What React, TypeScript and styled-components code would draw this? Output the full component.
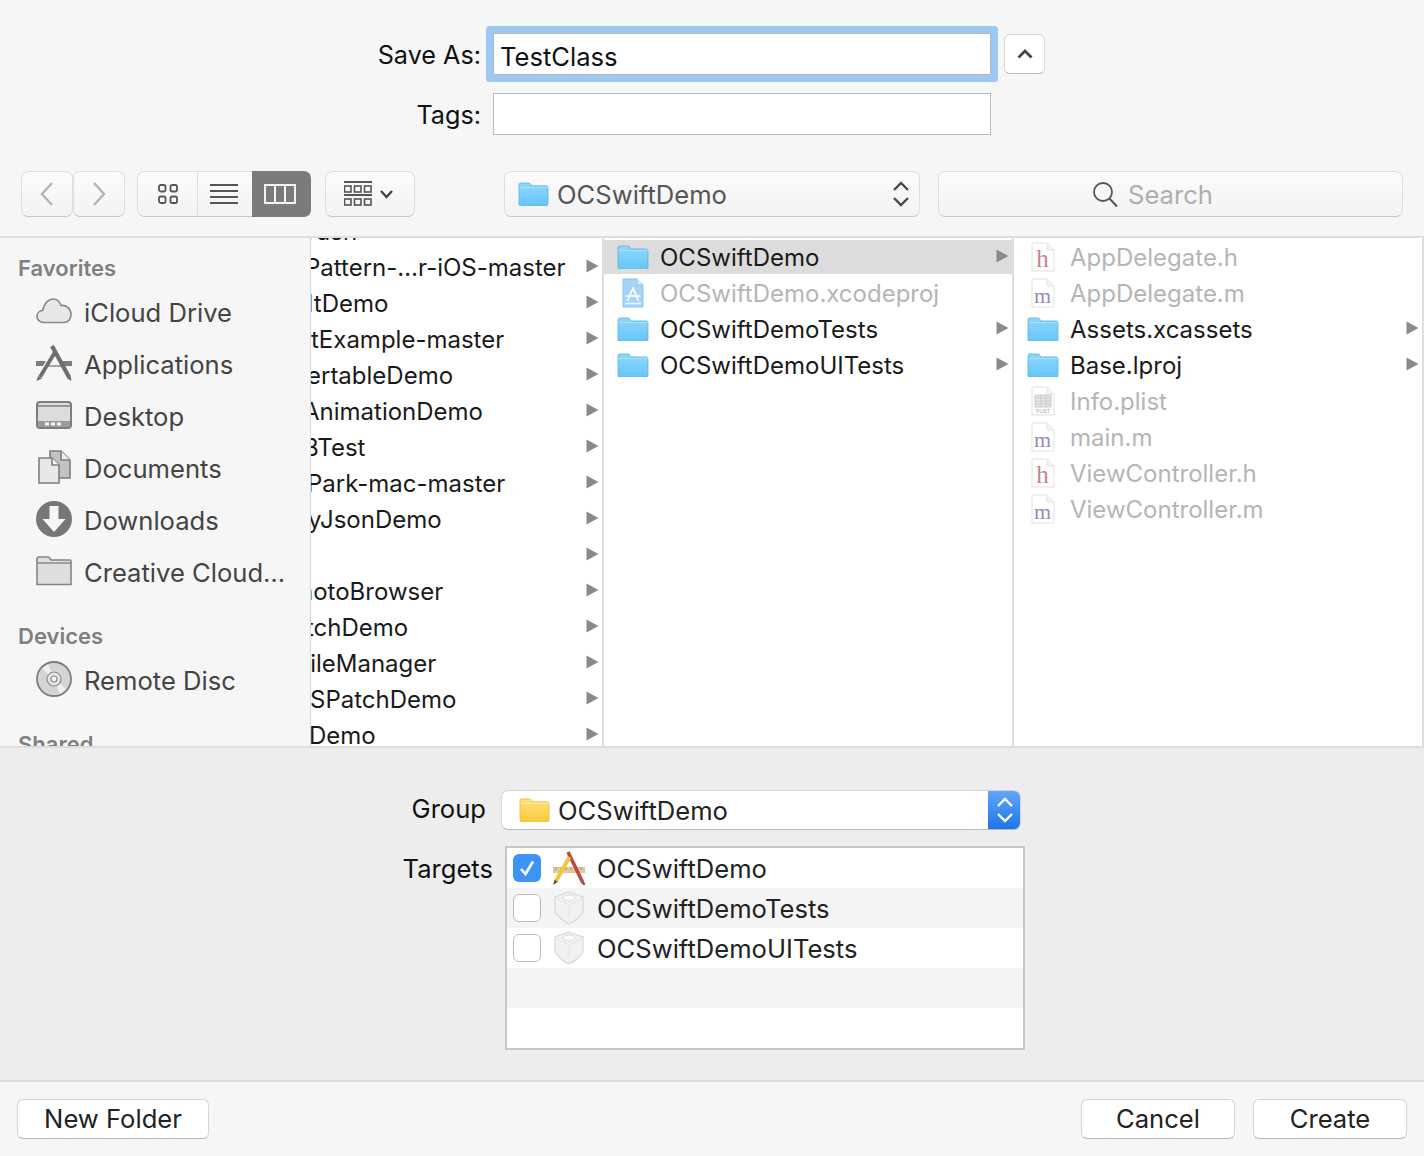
import * as React from 'react'
import styled, { createGlobalStyle } from 'styled-components'

const GlobalStyle = createGlobalStyle`
  html, body {
    margin: 0;
    padding: 0;
    background: #f6f6f6;
  }
  body {
    font-family: Inter, "Liberation Sans", sans-serif;
    font-size: 25.6px;
    color: #1a1a1a;
  }
  * {
    box-sizing: border-box;
  }
`

const FolderIcon = ({ yellow = false, width = 32 }: { yellow?: boolean; width?: number }) => {
  const id = yellow ? 'folderYellow' : 'folderBlue'
  return (
    <svg width={width} height={width * 0.78} viewBox="0 0 32 25" style={{ flex: 'none' }}>
      <defs>
        <linearGradient id={id} x1="0" y1="0" x2="0" y2="1">
          <stop offset="0" stopColor={yellow ? '#ffe27a' : '#8ed8fb'} />
          <stop offset="1" stopColor={yellow ? '#fcc93f' : '#66c5f8'} />
        </linearGradient>
      </defs>
      <path
        d="M1 2.500C1 1.500 1.800 1 3 1H11c1 0 1.500.5 2 1.500L13.500 4H29.500c1 0 1.500.8 1.500 2v17c0 .8-.7 1.300-1.500 1.300h-27c-.8 0-1.500-.5-1.500-1.300z"
        fill={`url(#${id})`}
        stroke={yellow ? '#edb930' : '#5bb0e0'}
        strokeWidth="0.8"
      />
      <path d="M1.500 5.500h29" stroke={yellow ? '#ffeeaa' : '#a8e2fc'} strokeWidth="1" />
    </svg>
  )
}

const SheetOutline = () => (
  <>
    <path d="M1 1h15l7 7v21H1z" fill="#fff" stroke="#e1e1e1" strokeWidth="1" />
    <path d="M16 1v7h7" fill="#f4f4f4" stroke="#e1e1e1" strokeWidth="1" />
  </>
)

const SourceIcon = ({ kind }: { kind: 'h' | 'm' }) => (
  <svg width="24" height="30" viewBox="0 0 24 30" style={{ flex: 'none' }}>
    <SheetOutline />
    <text
      x="11.500"
      y="25"
      textAnchor="middle"
      fontFamily='"Liberation Serif", serif'
      fontSize={kind === 'h' ? 25 : 22}
      fill={kind === 'h' ? '#c9808f' : '#9d8ab8'}
    >
      {kind}
    </text>
  </svg>
)

const PlistIcon = () => (
  <svg width="24" height="30" viewBox="0 0 24 30" style={{ flex: 'none' }}>
    <SheetOutline />
    <path
      d="M4 9h16v12H4z M4 12h16 M4 15h16 M4 18h16 M10 9v12 M15 9v12"
      fill="#e6e6e6"
      stroke="#cbcbcb"
      strokeWidth="1"
    />
    <text x="12" y="27" textAnchor="middle" fontFamily='"Liberation Sans", sans-serif' fontSize="5" fill="#a8a8a8">
      PLIST
    </text>
  </svg>
)

const ProjectIcon = () => (
  <svg width="24" height="30" viewBox="0 0 24 30" style={{ flex: 'none' }}>
    <path d="M2 1h14l6 6v22H2z" fill="#a9d3f5" stroke="#8fc1ea" strokeWidth="1" />
    <path d="M16 1v6h6" fill="#d9edfc" stroke="#8fc1ea" strokeWidth="1" />
    <path d="M4 25.500h16" stroke="#eaf5fd" strokeWidth="1.500" />
    <path d="M6.500 23l5.500-13 5.500 13 M4.500 18h15" fill="none" stroke="#fff" strokeWidth="1.600" />
  </svg>
)

const Arrow = () => (
  <ArrowWrap>
    <svg width="13" height="14" viewBox="0 0 13 14">
      <path d="M0.500 0.500L12.500 7L0.500 13.500z" fill="#8a8a8a" />
    </svg>
  </ArrowWrap>
)

const Chevron = ({ d }: { d: string }) => (
  <svg width="20" height="28" viewBox="0 0 20 28">
    <path d={d} fill="none" stroke="#b4b4b4" strokeWidth="2.400" />
  </svg>
)

const GridIcon = () => (
  <svg width="22" height="22" viewBox="0 0 22 22">
    <g fill="none" stroke="#555" strokeWidth="1.800">
      <rect x="2" y="2" width="6.500" height="6.500" rx="1.800" />
      <rect x="13.500" y="2" width="6.500" height="6.500" rx="1.800" />
      <rect x="2" y="13.500" width="6.500" height="6.500" rx="1.800" />
      <rect x="13.500" y="13.500" width="6.500" height="6.500" rx="1.800" />
    </g>
  </svg>
)

const ListIcon = () => (
  <svg width="30" height="22" viewBox="0 0 30 22">
    <path d="M1 2h28 M1 8h28 M1 14h28 M1 20h28" stroke="#555" strokeWidth="1.800" />
  </svg>
)

const ColumnsIcon = () => (
  <svg width="32" height="22" viewBox="0 0 32 22">
    <path d="M1 2h30v18H1z M11 2v18 M21 2v18" fill="none" stroke="#f4f4f4" strokeWidth="2" />
  </svg>
)

const ArrangeIcon = () => (
  <svg width="52" height="28" viewBox="0 0 52 28">
    <g fill="none" stroke="#555" strokeWidth="1.600">
      <path d="M0 2h28 M0 15h28" strokeWidth="1.800" />
      <rect x="0.500" y="6" width="6.500" height="6" />
      <rect x="10.500" y="6" width="6.500" height="6" />
      <rect x="20.500" y="6" width="6.500" height="6" />
      <rect x="0.500" y="19" width="6.500" height="6" />
      <rect x="10.500" y="19" width="6.500" height="6" />
      <rect x="20.500" y="19" width="6.500" height="6" />
    </g>
    <path d="M37 11l5.500 6 5.500-6" fill="none" stroke="#444" strokeWidth="2.400" />
  </svg>
)

const UpDownIcon = ({ color = '#4a4a4a' }: { color?: string }) => (
  <svg width="18" height="28" viewBox="0 0 18 28">
    <path d="M2 10l7-7 7 7 M2 18l7 7 7-7" fill="none" stroke={color} strokeWidth="2.400" />
  </svg>
)

const SearchIcon = () => (
  <svg width="27" height="27" viewBox="0 0 27 27">
    <circle cx="11" cy="11" r="9" fill="none" stroke="#555" strokeWidth="1.800" />
    <path d="M17.500 17.500L25 25.500" stroke="#555" strokeWidth="2" />
  </svg>
)

const CloudIcon = () => (
  <svg width="36" height="26" viewBox="0 0 36 26">
    <path
      d="M8 24.500C3.500 24.500 1 21.500 1 18.500c0-3.500 2.500-5.800 5.500-6C8 5.500 12.500 1 17 1c3.500 0 6.500 2 8 6.500 5.500-1 10 3.500 10 9 0 4.500-3 8-7 8z"
      fill="#e8e8e8"
      stroke="#888"
      strokeWidth="1.600"
    />
  </svg>
)

const AppsIcon = () => (
  <svg width="36" height="36" viewBox="0 0 36 36">
    <path d="M0 16h10l-3 5H0z M26 16h10v5h-7z" fill="#7d7d7d" />
    <path d="M9 21h18" stroke="#8a8a8a" strokeWidth="1.500" />
    <path d="M16 1L33 32" stroke="#6e6e6e" strokeWidth="4.200" />
    <path d="M18.500 8L4 32" stroke="#6e6e6e" strokeWidth="3.800" />
    <path d="M0.500 36l1.500-5 4 2.500z M35.500 36l-1-5.500-4 2.500z" fill="#6e6e6e" />
  </svg>
)

const DesktopIcon = () => (
  <svg width="36" height="28" viewBox="0 0 36 28">
    <rect x="1" y="1" width="34" height="26" rx="3" fill="#dcdcdc" stroke="#7d7d7d" strokeWidth="2" />
    <path d="M2 5h32" stroke="#7d7d7d" strokeWidth="1.500" />
    <path d="M2 20h32v4c0 1.500-1 2-2 2H4c-1 0-2-.5-2-2z" fill="#9a9a9a" />
    <path d="M9 21.500h4v3H9z M15 21.500h4v3h-4z M21 21.500h4v3h-4z" fill="#f2f2f2" />
  </svg>
)

const DocumentsIcon = () => (
  <svg width="34" height="34" viewBox="0 0 34 34">
    <path d="M13 1h11l9 9v18H13z" fill="#c2c2c2" stroke="#7d7d7d" strokeWidth="1.600" />
    <path d="M24 1v9h9" fill="#ececec" stroke="#7d7d7d" strokeWidth="1.600" />
    <path d="M2 8h13l7 7v18H2z" fill="#e8e8e8" stroke="#7d7d7d" strokeWidth="1.600" />
    <path d="M15 8v7h7" fill="#f8f8f8" stroke="#7d7d7d" strokeWidth="1.600" />
  </svg>
)

const DownloadsIcon = () => (
  <svg width="36" height="36" viewBox="0 0 36 36">
    <circle cx="18" cy="18" r="18" fill="#777" />
    <path d="M13.500 5h9v13h7L18 31 6.500 18h7z" fill="#f6f6f6" />
  </svg>
)

const GrayFolderIcon = () => (
  <svg width="36" height="30" viewBox="0 0 36 30">
    <path
      d="M1 3c0-1 .8-2 2-2h9c1 0 1.500.5 2 1.500L15 4h19c.7 0 1 .5 1 1v23.500H1z"
      fill="#dedede"
      stroke="#858585"
      strokeWidth="1.600"
    />
    <path d="M1 7h34" stroke="#8a8a8a" strokeWidth="1.400" />
  </svg>
)

const DiscIcon = () => (
  <svg width="36" height="36" viewBox="0 0 36 36">
    <circle cx="18" cy="18" r="17" fill="#d4d4d4" stroke="#7d7d7d" strokeWidth="1.800" />
    <path d="M18 18L30 28 24 33z M18 18L6 8 12 3z" fill="#efefef" />
    <circle cx="18" cy="18" r="7" fill="#e6e6e6" stroke="#8c8c8c" strokeWidth="1.200" />
    <circle cx="18" cy="18" r="3" fill="#f6f6f6" stroke="#8c8c8c" strokeWidth="1.200" />
  </svg>
)

const XcodeAppIcon = () => (
  <svg width="34" height="34" viewBox="0 0 34 34">
    <path d="M1 16h32v6H1z" fill="#e4c7a0" />
    <path d="M4 16v3 M9 16v3 M14 16v3 M19 16v3 M24 16v3 M29 16v3" stroke="#b89468" strokeWidth="1" />
    <path d="M16 1L31 32" stroke="#bd4a40" strokeWidth="3.600" />
    <path d="M31 32l1.500 2" stroke="#555" strokeWidth="2.400" />
    <path d="M17.500 6L4 30" stroke="#f1c93c" strokeWidth="4" />
    <path d="M2.500 28.500L1 34l5-3z" fill="#6e5a3a" />
  </svg>
)

const BrickIcon = () => (
  <svg width="32" height="34" viewBox="0 0 32 34">
    <path
      d="M16 1l14 5v14c0 3-10 12-14 13C12 32 2 23 2 20V6z"
      fill="#f1f1f1"
      stroke="#d8d8d8"
      strokeWidth="1.200"
    />
    <path d="M2 7l14 7 14-7 M16 14v18" fill="none" stroke="#e4e4e4" strokeWidth="1" />
    <ellipse cx="16" cy="7" rx="6" ry="3" fill="#fafafa" stroke="#dcdcdc" strokeWidth="1" />
  </svg>
)

const CheckIcon = () => (
  <svg width="20" height="20" viewBox="0 0 20 20">
    <path d="M4 11l4.500 5L16 3.500" fill="none" stroke="#fff" strokeWidth="2.600" />
  </svg>
)

const scrolledRows = [
  { name: 'rush', left: -4, arrow: false },
  { name: 'Pattern-…r-iOS-master', left: -6, arrow: true },
  { name: 'ItDemo', left: -4, arrow: true },
  { name: 'tExample-master', left: 0, arrow: true },
  { name: 'ertableDemo', left: -4, arrow: true },
  { name: 'AnimationDemo', left: -8, arrow: true },
  { name: 'BTest', left: -8, arrow: true },
  { name: 'Park-mac-master', left: -4, arrow: true },
  { name: 'yJsonDemo', left: -3, arrow: true },
  { name: '', left: 0, arrow: true },
  { name: 'hotoBrowser', left: -12, arrow: true },
  { name: 'tchDemo', left: -5, arrow: true },
  { name: 'FileManager', left: -15, arrow: true },
  { name: 'SPatchDemo', left: -1, arrow: true },
  { name: 'Demo', left: -2, arrow: true },
]

type FileKind = 'folder' | 'project' | 'h' | 'm' | 'plist'

const renderFileIcon = (kind: FileKind) => {
  if (kind === 'folder') return <FolderIcon />
  if (kind === 'project') return <ProjectIcon />
  if (kind === 'plist') return <PlistIcon />
  return <SourceIcon kind={kind} />
}

const projectRows: { name: string; kind: FileKind; selected?: boolean }[] = [
  { name: 'OCSwiftDemo', kind: 'folder', selected: true },
  { name: 'OCSwiftDemo.xcodeproj', kind: 'project' },
  { name: 'OCSwiftDemoTests', kind: 'folder' },
  { name: 'OCSwiftDemoUITests', kind: 'folder' },
]

const sourceRows: { name: string; kind: FileKind }[] = [
  { name: 'AppDelegate.h', kind: 'h' },
  { name: 'AppDelegate.m', kind: 'm' },
  { name: 'Assets.xcassets', kind: 'folder' },
  { name: 'Base.lproj', kind: 'folder' },
  { name: 'Info.plist', kind: 'plist' },
  { name: 'main.m', kind: 'm' },
  { name: 'ViewController.h', kind: 'h' },
  { name: 'ViewController.m', kind: 'm' },
]

export default () => {
  return (
    <Dialog>
      <GlobalStyle />
      <Header>
        <FormGrid>
          <FieldLabel>Save As:</FieldLabel>
          <FocusedField>TestClass</FocusedField>
          <DisclosureButton>
            <svg width="16" height="10" viewBox="0 0 16 10">
              <path d="M1.500 8.500L8 2l6.500 6.500" fill="none" stroke="#444" strokeWidth="2.800" />
            </svg>
          </DisclosureButton>
          <FieldLabel>Tags:</FieldLabel>
          <TagField />
        </FormGrid>
        <Toolbar>
          <ToolGroup>
            <ToolButton $width={52}>
              <Chevron d="M15 3L5 14l10 11" />
            </ToolButton>
            <ToolButton $width={52}>
              <Chevron d="M5 3l10 11L5 25" />
            </ToolButton>
          </ToolGroup>
          <ViewSwitch>
            <ViewSegment $width={60}>
              <GridIcon />
            </ViewSegment>
            <ViewSegment $width={55}>
              <ListIcon />
            </ViewSegment>
            <ViewSegment $width={59} $active>
              <ColumnsIcon />
            </ViewSegment>
          </ViewSwitch>
          <ToolButton $width={90}>
            <ArrangeIcon />
          </ToolButton>
          <PathPopup>
            <FolderIcon width={31} />
            <PathName>OCSwiftDemo</PathName>
            <UpDownIcon />
          </PathPopup>
          <SearchBox>
            <SearchIcon />
            <SearchText>Search</SearchText>
          </SearchBox>
        </Toolbar>
      </Header>

      <Browser>
        <Sidebar>
          <SidebarTitle>Favorites</SidebarTitle>
          <SidebarRow>
            <SidebarIcon><CloudIcon /></SidebarIcon>
            iCloud Drive
          </SidebarRow>
          <SidebarRow>
            <SidebarIcon><AppsIcon /></SidebarIcon>
            Applications
          </SidebarRow>
          <SidebarRow>
            <SidebarIcon><DesktopIcon /></SidebarIcon>
            Desktop
          </SidebarRow>
          <SidebarRow>
            <SidebarIcon><DocumentsIcon /></SidebarIcon>
            Documents
          </SidebarRow>
          <SidebarRow>
            <SidebarIcon><DownloadsIcon /></SidebarIcon>
            Downloads
          </SidebarRow>
          <SidebarRow>
            <SidebarIcon><GrayFolderIcon /></SidebarIcon>
            Creative Cloud…
          </SidebarRow>
          <SidebarTitle $gap={20}>Devices</SidebarTitle>
          <SidebarRow>
            <SidebarIcon><DiscIcon /></SidebarIcon>
            Remote Disc
          </SidebarRow>
          <SidebarTitle $gap={20}>Shared</SidebarTitle>
        </Sidebar>

        <ScrolledColumn>
          {scrolledRows.map((row, i) => (
            <ScrolledRow key={i}>
              <ScrolledName $left={row.left}>{row.name}</ScrolledName>
              {row.arrow && <Arrow />}
            </ScrolledRow>
          ))}
        </ScrolledColumn>

        <Column $width={408}>
          {projectRows.map((row) => (
            <FileRow key={row.name} $selected={row.selected}>
              <FileIcon>{renderFileIcon(row.kind)}</FileIcon>
              <FileName $dimmed={row.kind !== 'folder'}>{row.name}</FileName>
              {row.kind === 'folder' && <Arrow />}
            </FileRow>
          ))}
        </Column>

        <Column $width={408}>
          {sourceRows.map((row) => (
            <FileRow key={row.name}>
              <FileIcon>{renderFileIcon(row.kind)}</FileIcon>
              <FileName $dimmed={row.kind !== 'folder'}>{row.name}</FileName>
              {row.kind === 'folder' && <Arrow />}
            </FileRow>
          ))}
        </Column>
      </Browser>

      <Accessory>
        <GroupRow>
          <GroupLabel>Group</GroupLabel>
          <GroupPopup>
            <FolderIcon yellow width={31} />
            <GroupName>OCSwiftDemo</GroupName>
            <Stepper>
              <UpDownIcon color="#fff" />
            </Stepper>
          </GroupPopup>
        </GroupRow>
        <TargetsRow>
          <TargetsLabel>Targets</TargetsLabel>
          <TargetList>
            <TargetRow>
              <CheckBox $checked>
                <CheckIcon />
              </CheckBox>
              <TargetIcon><XcodeAppIcon /></TargetIcon>
              OCSwiftDemo
            </TargetRow>
            <TargetRow $striped>
              <CheckBox />
              <TargetIcon><BrickIcon /></TargetIcon>
              OCSwiftDemoTests
            </TargetRow>
            <TargetRow>
              <CheckBox />
              <TargetIcon><BrickIcon /></TargetIcon>
              OCSwiftDemoUITests
            </TargetRow>
            <TargetRow $striped />
            <TargetRow />
          </TargetList>
        </TargetsRow>
      </Accessory>

      <Footer>
        <PushButton $width={192}>New Folder</PushButton>
        <FooterActions>
          <PushButton $width={154}>Cancel</PushButton>
          <PushButton $width={154}>Create</PushButton>
        </FooterActions>
      </Footer>
    </Dialog>
  )
}

const Dialog = styled.div`
  width: 1424px;
  height: 1156px;
  display: flex;
  flex-direction: column;
  overflow: hidden;
  background: #f6f6f6;
`

const Header = styled.header`
  height: 236px;
  padding: 33px 0 0 21px;
`

const FormGrid = styled.div`
  display: grid;
  grid-template-columns: 472px 498px 54px;
  grid-template-rows: 42px 42px;
  row-gap: 18px;
  align-items: center;
`

const FieldLabel = styled.div`
  justify-self: end;
  margin: 2px 12px 0 0;
  font-size: 25.200px;
  color: #111;
`

const FocusedField = styled.div`
  height: 42px;
  padding: 5px 6px 0;
  background: #fff;
  border: 1px solid #b4b4b4;
  box-shadow: 0 0 0 7px #9dc8f3;
  border-radius: 1px;
  line-height: 36px;
  color: #111;
`

const DisclosureButton = styled.div`
  justify-self: end;
  width: 41px;
  height: 40px;
  display: flex;
  align-items: center;
  justify-content: center;
  background: #fff;
  border: 1px solid #d6d6d6;
  border-bottom-color: #bdbdbd;
  border-radius: 6px;
`

const TagField = styled.div`
  height: 42px;
  background: #fff;
  border: 1px solid #bababa;
`

const Toolbar = styled.div`
  display: flex;
  margin-top: 36px;
  height: 46px;
`

const ToolGroup = styled.div`
  display: flex;
  margin-right: 12px;
`

const ToolButton = styled.div<{ $width: number }>`
  width: ${(p) => p.$width}px;
  height: 46px;
  display: flex;
  align-items: center;
  justify-content: center;
  background: linear-gradient(#fbfbfb, #f3f3f3);
  border: 1px solid #dedede;
  border-bottom-color: #c6c6c6;
  border-radius: 7px;
`

const ViewSwitch = styled.div`
  display: flex;
  width: 174px;
  height: 46px;
  margin-right: 14px;
  overflow: hidden;
  border-radius: 7px;
`

const ViewSegment = styled.div<{ $width: number; $active?: boolean }>`
  flex: 0 0 ${(p) => p.$width}px;
  display: flex;
  align-items: center;
  justify-content: center;
  background: ${(p) => (p.$active ? '#7b7b7b' : 'linear-gradient(#fbfbfb, #f3f3f3)')};
  border: ${(p) => (p.$active ? 'none' : '1px solid #dedede')};
  border-right: none;
  border-bottom-color: #c6c6c6;
  &:first-child {
    border-radius: 7px 0 0 7px;
  }
  &:nth-child(2) {
    padding-right: 2px;
  }
  &:nth-child(3) {
    padding-right: 3px;
  }
`

const PathPopup = styled.div`
  display: flex;
  align-items: center;
  width: 416px;
  height: 46px;
  margin-left: 89px;
  padding: 0 9px 0 13px;
  background: linear-gradient(#fbfbfb, #f3f3f3);
  border: 1px solid #dedede;
  border-bottom-color: #c6c6c6;
  border-radius: 7px;
`

const PathName = styled.div`
  flex: 1;
  margin-left: 8px;
  color: #555;
`

const SearchBox = styled.div`
  display: flex;
  align-items: center;
  justify-content: center;
  width: 465px;
  height: 46px;
  margin-left: 18px;
  padding: 0 36px 0 0;
  background: linear-gradient(#fbfbfb, #f3f3f3);
  border: 1px solid #dedede;
  border-bottom-color: #c6c6c6;
  border-radius: 7px;
`

const SearchText = styled.div`
  margin-left: 9px;
  color: #aeaeae;
`

const Browser = styled.main`
  display: flex;
  height: 512px;
  background: #fff;
  border-top: 2px solid #dedede;
  border-bottom: 2px solid #dedede;
  border-right: 2px solid #dedede;
`

const Sidebar = styled.nav`
  width: 311px;
  flex: none;
  padding: 12px 0 0 0;
  overflow: hidden;
  background: #f6f6f6;
  border-right: 1px solid #d6d6d6;
`

const SidebarTitle = styled.div<{ $gap?: number }>`
  height: 36px;
  margin-top: ${(p) => p.$gap ?? 0}px;
  padding-left: 18px;
  font-size: 22px;
  font-weight: 600;
  line-height: 36px;
  color: #7f7f7f;
`

const SidebarRow = styled.div`
  display: flex;
  align-items: center;
  height: 52px;
  padding: 1px 0 0 36px;
  white-space: nowrap;
  color: #444;
`

const SidebarIcon = styled.span`
  display: flex;
  align-items: center;
  justify-content: center;
  width: 36px;
  height: 36px;
  margin: -3px 12px 0 0;
`

const ScrolledColumn = styled.div`
  width: 293px;
  flex: none;
  overflow: hidden;
  font-size: 24px;
  border-right: 2px solid #dedede;
  & > :first-child {
    margin-top: -24px;
  }
`

const ScrolledRow = styled.div`
  display: flex;
  align-items: center;
  height: 36px;
  padding: 0 3px 2px 0;
  white-space: nowrap;
`

const ScrolledName = styled.span<{ $left: number }>`
  flex: 1;
  margin-left: ${(p) => p.$left}px;
`

const ArrowWrap = styled.span`
  display: flex;
  flex: none;
  margin-top: -2px;
`

const Column = styled.div<{ $width: number }>`
  width: ${(p) => p.$width}px;
  flex: none;
  padding-top: 2px;
  overflow: hidden;
  font-size: 24px;
  & + & {
    margin-left: 2px;
    box-shadow: -2px 0 0 #dedede;
  }
`

const FileRow = styled.div<{ $selected?: boolean }>`
  display: flex;
  align-items: center;
  height: 36px;
  padding: 0 3px 2px 13px;
  background: ${(p) => (p.$selected ? '#dcdcdc' : 'transparent')};
  box-shadow: ${(p) => (p.$selected ? 'inset 0 -2px 0 #fff' : 'none')};
`

const FileIcon = styled.span`
  display: flex;
  align-items: center;
  justify-content: center;
  width: 32px;
  height: 34px;
  margin-right: 11px;
`

const FileName = styled.span<{ $dimmed: boolean }>`
  flex: 1;
  white-space: nowrap;
  color: ${(p) => (p.$dimmed ? '#b5b5b5' : '#1a1a1a')};
`

const Accessory = styled.section`
  height: 332px;
  padding-top: 42px;
  background: #ededed;
`

const GroupRow = styled.div`
  display: flex;
  align-items: center;
  height: 40px;
`

const GroupLabel = styled.div`
  width: 486px;
  padding-bottom: 3px;
  text-align: right;
  color: #111;
`

const GroupPopup = styled.div`
  display: flex;
  align-items: center;
  width: 520px;
  height: 40px;
  margin-left: 15px;
  padding-left: 17px;
  background: #fff;
  border: 1px solid #d4d4d4;
  border-bottom-color: #b8b8b8;
  border-radius: 7px;
  overflow: hidden;
`

const GroupName = styled.div`
  flex: 1;
  margin-left: 8px;
  color: #222;
`

const Stepper = styled.div`
  display: flex;
  align-items: center;
  justify-content: center;
  width: 33px;
  height: 40px;
  margin-right: -1px;
  background: linear-gradient(#62a8f8, #1c74e8);
`

const TargetsRow = styled.div`
  display: flex;
  align-items: flex-start;
  margin-top: 16px;
`

const TargetsLabel = styled.div`
  width: 493px;
  margin-top: 7px;
  text-align: right;
  color: #111;
`

const TargetList = styled.div`
  width: 520px;
  height: 204px;
  margin-left: 12px;
  background: #fff;
  border: 2px solid #c6c6c6;
`

const TargetRow = styled.div<{ $striped?: boolean }>`
  display: flex;
  align-items: center;
  height: 40px;
  padding-left: 6px;
  color: #222;
  background: ${(p) => (p.$striped ? '#f4f4f4' : '#fff')};
`

const CheckBox = styled.span<{ $checked?: boolean }>`
  display: flex;
  align-items: center;
  justify-content: center;
  width: 28px;
  height: 28px;
  border-radius: 6px;
  background: ${(p) => (p.$checked ? '#3d94f6' : '#fff')};
  border: ${(p) => (p.$checked ? 'none' : '1px solid #bdbdbd')};
`

const TargetIcon = styled.span`
  display: flex;
  align-items: center;
  justify-content: center;
  width: 34px;
  height: 36px;
  margin: 0 11px;
`

const Footer = styled.footer`
  flex: 1;
  display: flex;
  align-items: flex-start;
  justify-content: space-between;
  padding: 17px 17px 0;
  background: #f6f6f6;
  border-top: 2px solid #dcdcdc;
`

const FooterActions = styled.div`
  display: flex;
  gap: 18px;
`

const PushButton = styled.div<{ $width: number }>`
  width: ${(p) => p.$width}px;
  height: 40px;
  display: flex;
  align-items: center;
  justify-content: center;
  padding-bottom: 2px;
  background: #fff;
  border: 1px solid #d6d6d6;
  border-bottom-color: #b8b8b8;
  border-radius: 6px;
  color: #222;
`
